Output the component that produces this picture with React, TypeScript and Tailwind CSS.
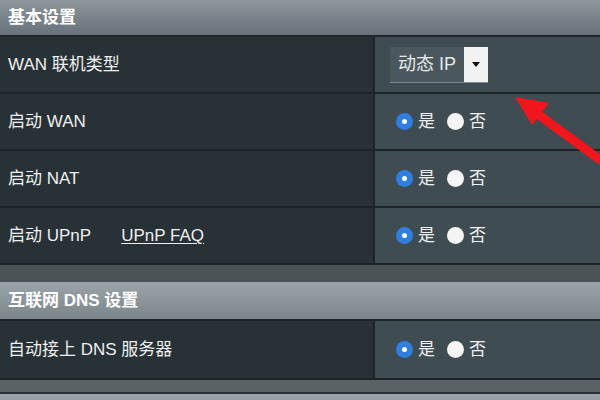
import React from 'react';

const font = { fontFamily: '"Liberation Sans", "Noto Sans CJK SC", sans-serif' };

const SectionHeader = ({ title }: { title: string }) => (
    <div className="h-[39px] px-2 flex items-center bg-gradient-to-b from-[#9ba5a9] to-[#7b868a] border-b-2 border-[#1f2629] text-[17px] font-bold text-white">
        {title}
    </div>
);

const Radio = ({ checked }: { checked?: boolean }) =>
    checked ? (
        <span className="w-[17px] h-[17px] shrink-0 rounded-full bg-[#2f7fe3] flex items-center justify-center">
            <span className="w-[5px] h-[5px] rounded-full bg-white" />
        </span>
    ) : (
        <span className="w-[17px] h-[17px] shrink-0 rounded-full bg-[#f4f4f4] block" />
    );

const YesNo = () => (
    <div className="ml-[6px] flex items-center text-[17px] text-[#eef0f1]">
        <Radio checked />
        <span className="ml-[5px]">是</span>
        <span className="ml-[12px] flex"><Radio /></span>
        <span className="ml-[5px]">否</span>
    </div>
);

const Row = ({ label, children, tall }: { label: React.ReactNode; children: React.ReactNode; tall?: boolean }) => (
    <div className={`flex ${tall ? 'h-[59px]' : 'h-[57px]'} border-b-2 border-[#1d2427]`}>
        <div className="w-[375px] shrink-0 bg-[#283135] border-r-2 border-[#1d2427] px-2 flex items-center text-[17px] text-[#eef0f1]">
            {label}
        </div>
        <div className="flex-1 bg-[#3f4c51] pl-[15px] flex items-center">{children}</div>
    </div>
);

export default function App() {
    return (
        <div className="relative w-[600px] h-[400px] overflow-hidden bg-[#4b5357]" style={font}>
            <div className="h-[37px] px-2 flex items-center bg-gradient-to-b from-[#8d979b] to-[#67727a] border-b-2 border-[#1f2629] text-[17px] font-bold text-white">
                基本设置
            </div>

            <Row label="WAN 联机类型">
                <div className="flex items-stretch h-[36px] bg-[#4a585d] border-b border-[#7d8a8e]">
                    <span className="px-2 flex items-center text-[18px] text-[#e6e9ea]">动态 IP</span>
                    <span className="w-[24px] bg-[#f2f2f2] flex items-center justify-center">
                        <svg width="8" height="5" viewBox="0 0 8 5"><path d="M0 0h8L4 5z" fill="#111" /></svg>
                    </span>
                </div>
            </Row>
            <Row label="启动 WAN"><YesNo /></Row>
            <Row label="启动 NAT"><YesNo /></Row>
            <Row label={<><span>启动 UPnP</span><a className="ml-[30px] underline underline-offset-2 decoration-1">UPnP FAQ</a></>}>
                <YesNo />
            </Row>

            <div className="h-[17px] bg-[#4b5357]" />
            <SectionHeader title="互联网 DNS 设置" />
            <Row label="自动接上 DNS 服务器" tall><YesNo /></Row>
            <div className="h-[14px] bg-[#596165] border-b-2 border-[#2a3134]" />
            <div className="h-[20px] bg-gradient-to-b from-[#9aa4a8] to-[#8a9498]" />

            {/* red annotation arrow */}
            <svg className="absolute inset-0 pointer-events-none" width="600" height="400">
                <line x1="532" y1="110" x2="625" y2="178" stroke="#f2151b" strokeWidth="9" />
                <polygon points="515,97 549,103 532,125" fill="#f2151b" />
            </svg>
        </div>
    );
}
